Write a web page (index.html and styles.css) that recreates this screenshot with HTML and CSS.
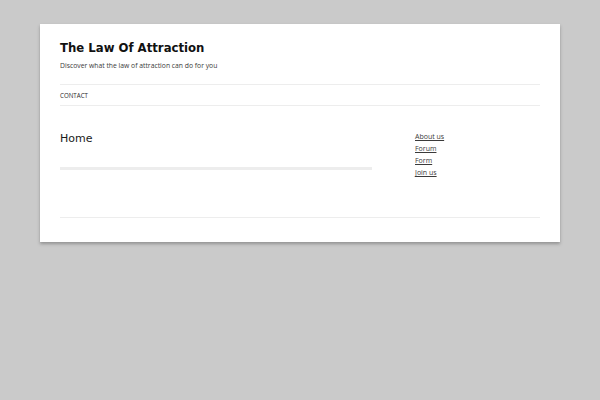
FILE: index.html
```html
<!DOCTYPE html>
<html>
<head>
<meta charset="utf-8">
<link rel="stylesheet" href="styles.css">
</head>
<body>
<div class="page">
  <header class="site-header">
    <h1 class="site-title">The Law Of Attraction</h1>
    <p class="site-desc">Discover what the law of attraction can do for you</p>
    <nav class="main-nav"><a href="#">CONTACT</a></nav>
  </header>
  <div class="main">
    <div class="content">
      <h2 class="entry-title">Home</h2>
      <div class="entry-rule"></div>
    </div>
    <aside class="sidebar">
      <ul>
        <li><a href="#">About us</a></li>
        <li><a href="#">Forum</a></li>
        <li><a href="#">Form</a></li>
        <li><a href="#">Join us</a></li>
      </ul>
    </aside>
  </div>
  <footer class="site-footer"></footer>
</div>
</body>
</html>
```
FILE: styles.css
```css
html, body {
  margin: 0;
  padding: 0;
}
body {
  background: #cacaca;
  font-family: "Open Sans", "DejaVu Sans", sans-serif;
  color: #444;
  padding: 24px 40px;
}
.page {
  background: #fff;
  box-shadow: 0 2px 3px rgba(80, 80, 80, 0.45);
  padding: 0 20px;
  height: 218px;
  box-sizing: border-box;
}
.site-header {
  padding-top: 15px;
}
.site-title {
  margin: 0;
  font-family: "DejaVu Sans Condensed", "DejaVu Sans", sans-serif;
  font-stretch: condensed;
  font-weight: bold;
  font-size: 13px;
  line-height: 17px;
  color: #111;
}
.site-desc {
  margin: 5px 0 0;
  font-size: 6.8px;
  line-height: 10px;
  color: #3a3a3a;
}
.main-nav {
  margin-top: 13px;
  border-top: 1px solid #ededed;
  border-bottom: 1px solid #ededed;
  height: 20px;
  display: flex;
  align-items: center;
}
.main-nav a {
  font-size: 6.2px;
  color: #2a2a2a;
  text-decoration: none;
  text-transform: uppercase;
}
.main {
  display: grid;
  grid-template-columns: 312px 125px;
  column-gap: 43px;
  align-items: start;
  padding-top: 24px;
  height: 111px;
  box-sizing: border-box;
}
.content {
  padding-top: 2px;
}
.entry-title {
  margin: 0;
  font-family: "DejaVu Sans", sans-serif;
  font-weight: normal;
  font-size: 11px;
  line-height: 13px;
  color: #1a1a1a;
}
.entry-rule {
  margin-top: 22px;
  height: 3px;
  background: #ededed;
}
.sidebar ul {
  list-style: none;
  margin: 0;
  padding: 1px 0 0;
}
.sidebar li {
  font-size: 7px;
  line-height: 12px;
}
.sidebar a {
  color: #3a3a3a;
}
.site-footer {
  border-top: 1px solid #ededed;
}
```
